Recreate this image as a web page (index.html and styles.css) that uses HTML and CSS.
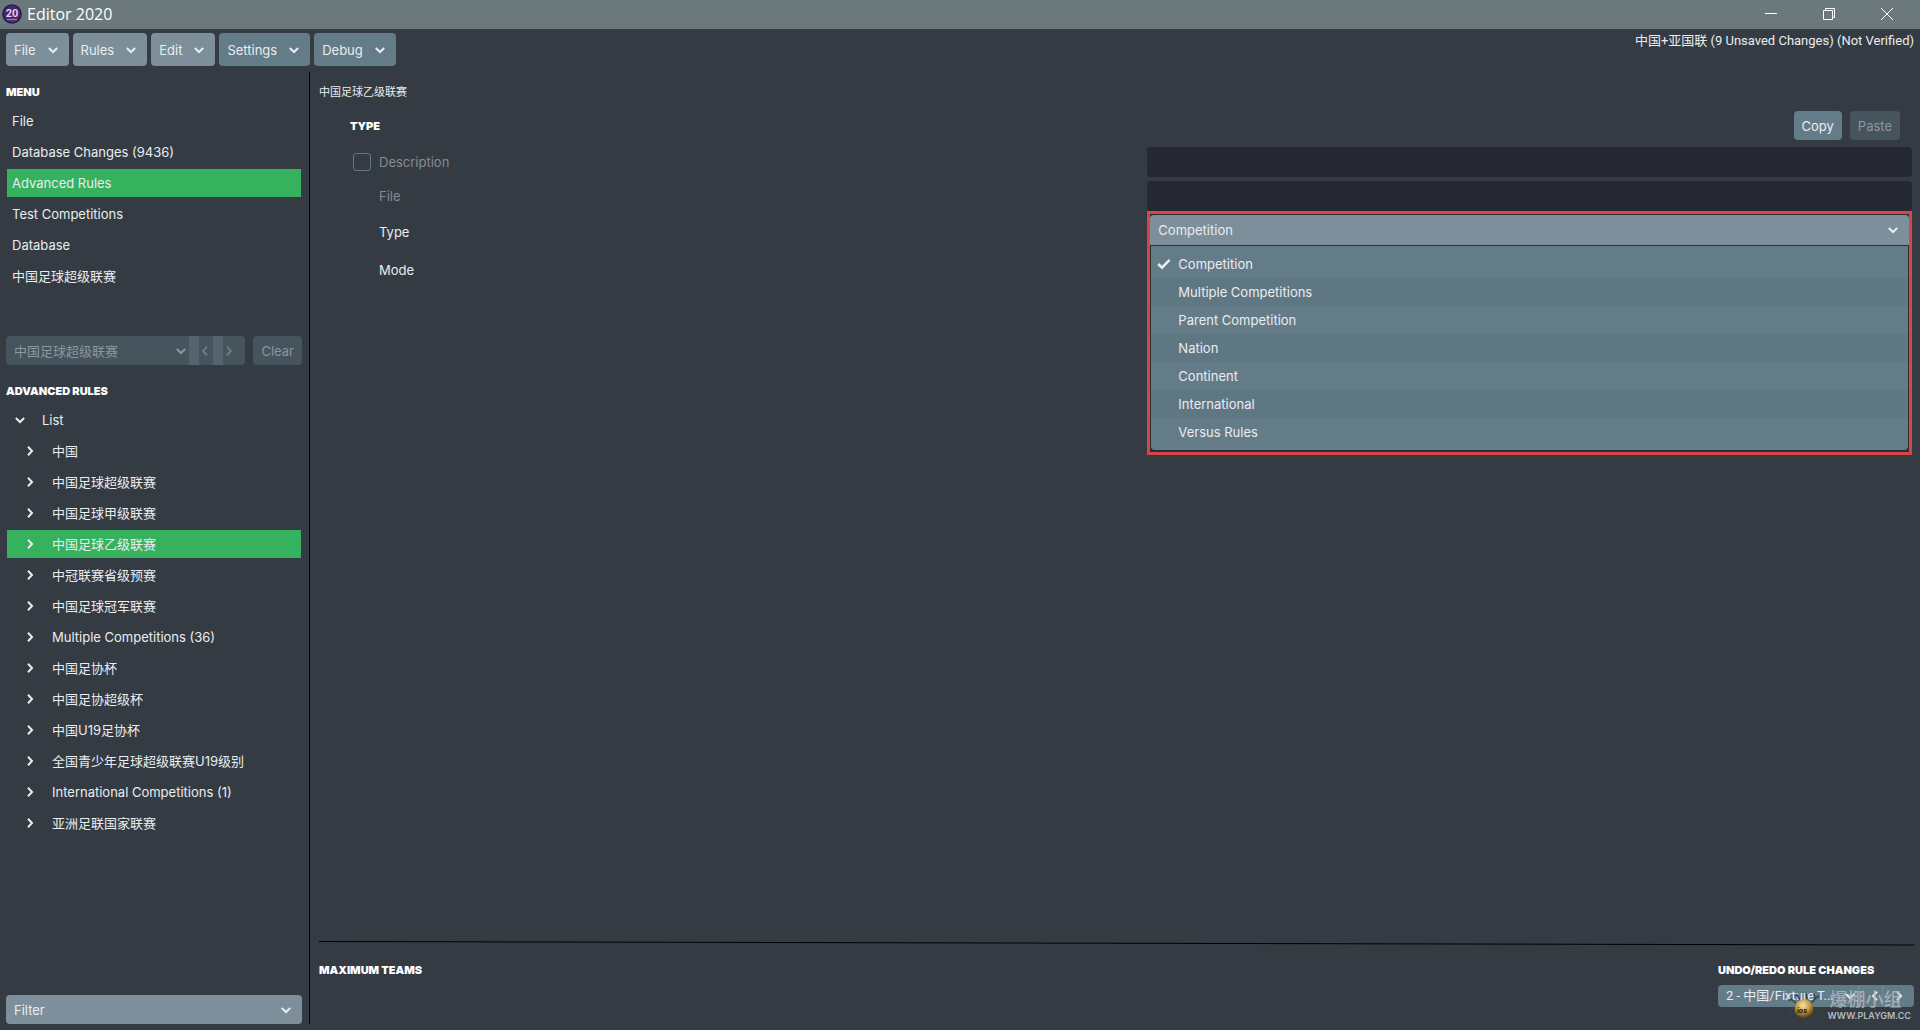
FILE: index.html
```html
<!DOCTYPE html>
<html lang="en">
<head>
    <meta charset="UTF-8">
    <meta name="viewport" content="width=device-width, initial-scale=1.0">
    <title>Editor 2020</title>
    <link rel="stylesheet" href="styles.css">
</head>
<body>
    <!-- Shared icons -->
    <svg class="sprite" aria-hidden="true">
        <symbol id="chevron-down" viewBox="0 0 12 12"><path d="M1.8 4 L6 8 L10.2 4" fill="none" stroke="currentColor" stroke-width="2"/></symbol>
        <symbol id="chevron-right" viewBox="0 0 12 12"><path d="M4 1.8 L8 6 L4 10.2" fill="none" stroke="currentColor" stroke-width="2"/></symbol>
        <symbol id="chevron-left" viewBox="0 0 12 12"><path d="M8 1.8 L4 6 L8 10.2" fill="none" stroke="currentColor" stroke-width="2"/></symbol>
        <symbol id="check" viewBox="0 0 14 12"><path d="M1.2 6 L5 9.6 L12.6 1.8" fill="none" stroke="currentColor" stroke-width="2.6"/></symbol>
    </svg>

    <header class="titlebar">
        <svg class="logo" viewBox="0 0 20 20" aria-hidden="true">
            <circle cx="10" cy="10" r="9.8" fill="#2c1b4a"/>
            <circle cx="10" cy="10" r="8.4" fill="#43286a"/>
            <text x="10" y="13" text-anchor="middle" class="logo-text">20</text>
            <path d="M5 15.5 H15" stroke="#9b6fb4" stroke-width="1.4"/>
        </svg>
        <span class="app-name">Editor 2020</span>
        <div class="window-controls">
            <button type="button" aria-label="Minimize"><svg viewBox="0 0 14 14"><path d="M1 6.5 H13"/></svg></button>
            <button type="button" aria-label="Restore"><svg viewBox="0 0 14 14"><path d="M1.5 3.5 H10.5 V12.5 H1.5 Z M3.5 3.5 V1.5 H12.5 V10.5 H10.5"/></svg></button>
            <button type="button" aria-label="Close"><svg viewBox="0 0 14 14"><path d="M1 1 L13 13 M13 1 L1 13"/></svg></button>
        </div>
    </header>

    <div class="toolbar">
        <nav class="toolbar-menus">
            <button type="button" class="btn light">File <svg class="icon"><use href="#chevron-down"/></svg></button>
            <button type="button" class="btn light">Rules <svg class="icon"><use href="#chevron-down"/></svg></button>
            <button type="button" class="btn light">Edit <svg class="icon"><use href="#chevron-down"/></svg></button>
            <button type="button" class="btn">Settings <svg class="icon"><use href="#chevron-down"/></svg></button>
            <button type="button" class="btn">Debug <svg class="icon"><use href="#chevron-down"/></svg></button>
        </nav>
        <span class="status">中国+亚国联 (9 Unsaved Changes) (Not Verified)</span>
    </div>

    <div class="workspace">
        <aside class="sidebar">
            <h2>Menu</h2>
            <nav class="menu">
                <a href="#">File</a>
                <a href="#">Database Changes (9436)</a>
                <a href="#" class="active">Advanced Rules</a>
                <a href="#">Test Competitions</a>
                <a href="#">Database</a>
                <a href="#">中国足球超级联赛</a>
            </nav>

            <div class="history">
                <div class="split">
                    <div class="select">
                        <select aria-label="History" disabled><option>中国足球超级联赛</option></select>
                        <svg class="icon"><use href="#chevron-down"/></svg>
                    </div>
                    <button type="button" aria-label="Back" disabled><svg class="icon"><use href="#chevron-left"/></svg></button>
                    <button type="button" aria-label="Forward" disabled><svg class="icon"><use href="#chevron-right"/></svg></button>
                </div>
                <button type="button" class="btn small" disabled>Clear</button>
            </div>

            <h2>Advanced Rules</h2>
            <nav class="menu tree">
                <a href="#" class="root"><svg class="icon"><use href="#chevron-down"/></svg>List</a>
                <a href="#"><svg class="icon"><use href="#chevron-right"/></svg>中国</a>
                <a href="#"><svg class="icon"><use href="#chevron-right"/></svg>中国足球超级联赛</a>
                <a href="#"><svg class="icon"><use href="#chevron-right"/></svg>中国足球甲级联赛</a>
                <a href="#" class="active"><svg class="icon"><use href="#chevron-right"/></svg>中国足球乙级联赛</a>
                <a href="#"><svg class="icon"><use href="#chevron-right"/></svg>中冠联赛省级预赛</a>
                <a href="#"><svg class="icon"><use href="#chevron-right"/></svg>中国足球冠军联赛</a>
                <a href="#"><svg class="icon"><use href="#chevron-right"/></svg>Multiple Competitions (36)</a>
                <a href="#"><svg class="icon"><use href="#chevron-right"/></svg>中国足协杯</a>
                <a href="#"><svg class="icon"><use href="#chevron-right"/></svg>中国足协超级杯</a>
                <a href="#"><svg class="icon"><use href="#chevron-right"/></svg>中国U19足协杯</a>
                <a href="#"><svg class="icon"><use href="#chevron-right"/></svg>全国青少年足球超级联赛U19级别</a>
                <a href="#"><svg class="icon"><use href="#chevron-right"/></svg>International Competitions (1)</a>
                <a href="#"><svg class="icon"><use href="#chevron-right"/></svg>亚洲足联国家联赛</a>
            </nav>

            <div class="select filter">
                <select aria-label="Filter"><option>Filter</option></select>
                <svg class="icon"><use href="#chevron-down"/></svg>
            </div>
        </aside>

        <main class="content">
            <p class="breadcrumb">中国足球乙级联赛</p>
            <div class="section-head">
                <h2>Type</h2>
                <div class="actions">
                    <button type="button" class="btn small">Copy</button>
                    <button type="button" class="btn small" disabled>Paste</button>
                </div>
            </div>

            <form class="rules-form">
                <div class="field muted">
                    <div class="field-label">
                        <input type="checkbox" id="use-description" aria-label="Use description">
                        <label for="description">Description</label>
                    </div>
                    <input type="text" id="description">
                </div>
                <div class="field muted">
                    <div class="field-label"><label for="file">File</label></div>
                    <input type="text" id="file">
                </div>
                <div class="field tall">
                    <div class="field-label"><label for="type">Type</label></div>
                    <div class="dropdown">
                        <div class="popup">
                            <div class="select">
                                <select id="type"><option>Competition</option></select>
                                <svg class="icon"><use href="#chevron-down"/></svg>
                            </div>
                            <div class="options" role="listbox" aria-label="Type">
                                <button type="button" role="option" aria-selected="true"><svg class="tick"><use href="#check"/></svg>Competition</button>
                                <button type="button" role="option">Multiple Competitions</button>
                                <button type="button" role="option">Parent Competition</button>
                                <button type="button" role="option">Nation</button>
                                <button type="button" role="option">Continent</button>
                                <button type="button" role="option">International</button>
                                <button type="button" role="option">Versus Rules</button>
                            </div>
                        </div>
                    </div>
                </div>
                <div class="field tall">
                    <div class="field-label"><label for="mode">Mode</label></div>
                    <div class="mode"><select id="mode"></select></div>
                </div>
            </form>

            <footer class="footer">
                <svg class="rule" viewBox="0 0 100 6" preserveAspectRatio="none" aria-hidden="true"><path d="M0 1.5 L100 5"/></svg>
                <div class="footer-row">
                    <h2>Maximum Teams</h2>
                    <div class="undo">
                        <h2>Undo/Redo Rule Changes</h2>
                        <div class="split">
                            <div class="select">
                                <select aria-label="Rule change"><option>2 - 中国/Fixture T...</option></select>
                                <svg class="icon"><use href="#chevron-down"/></svg>
                            </div>
                            <button type="button" aria-label="Undo"><svg class="icon"><use href="#chevron-left"/></svg></button>
                            <button type="button" aria-label="Redo"><svg class="icon"><use href="#chevron-right"/></svg></button>
                        </div>
                    </div>
                </div>
            </footer>
        </main>
    </div>

    <div class="watermark">
        <svg viewBox="0 0 36 32" aria-hidden="true">
            <defs>
                <radialGradient id="ball" cx="0.45" cy="0.3" r="0.7">
                    <stop offset="0" stop-color="#f6e3a8"/>
                    <stop offset="0.5" stop-color="#c89a3c"/>
                    <stop offset="1" stop-color="#4a3412"/>
                </radialGradient>
            </defs>
            <path d="M10 13 L5 9 L3 11 M9 18 L2 19 M11 23 L4 23 M14 10 L11 5 L9 6 M21 9 L20 3 M25 13 L29 9 L28 4 M28 9 L33 6" fill="none" stroke="#39434b" stroke-width="1.6"/>
            <circle cx="18" cy="19" r="9.5" fill="url(#ball)"/>
            <text x="16" y="23" text-anchor="middle" class="ball-text">ios</text>
        </svg>
        <div class="watermark-text">
            <span class="watermark-name">爆棚小组</span>
            <span>WWW.PLAYGM.CC</span>
        </div>
    </div>
</body>
</html>
```

FILE: styles.css
```css
* { box-sizing: border-box; }
body { margin: 0; min-height: 100vh; display: flex; flex-direction: column; background-color: #353b43; color: #e9edf0; font-family: Inter, "Noto Sans CJK SC", sans-serif; font-size: 13px; line-height: 20px; }
button, select, input { font: inherit; color: inherit; border: none; margin: 0; }
select { appearance: none; background: none; width: 100%; height: 100%; padding: 0 8px; opacity: 1; }
h2 { margin: 0; font-size: 11px; line-height: 20px; font-weight: 900; text-transform: uppercase; color: #fff; }
.sprite { display: none; }
.icon { width: 12px; height: 12px; flex: none; }

.titlebar { display: flex; align-items: center; height: 29px; padding: 0 4px 1px 2px; background-color: #6b797d; color: #fff; }
.logo { width: 20px; height: 20px; }
.logo-text { font: 700 11px Roboto, sans-serif; fill: #efc8f2; }
.app-name { margin-left: 5px; font-family: "Open Sans", sans-serif; font-size: 16px; }
.window-controls { display: flex; margin-left: auto; }
.window-controls button { width: 58px; height: 28px; padding: 0; background: none; }
.window-controls svg { display: block; width: 14px; height: 14px; margin: auto; fill: none; stroke: #fff; stroke-width: 1; }

.toolbar { display: flex; justify-content: space-between; padding: 4px 6px 0; }
.toolbar-menus { display: flex; gap: 4px; }
.btn { display: flex; align-items: center; gap: 11px; height: 33px; padding: 0 10px 0 8px; border-radius: 4px; background-color: #647b88; }
.btn.light { background-color: #7c8f9a; }
.btn.small { height: 29px; padding: 0 8px; }
.btn:disabled { background-color: #46545d; color: #8b969d; }
.status { margin-top: -2px; font-family: Roboto, "Noto Sans CJK SC", sans-serif; }

.workspace { flex: 1; display: flex; margin-top: 6px; }
.sidebar { display: flex; flex-direction: column; width: 310px; margin-bottom: 6px; padding: 10px 7px 0 6px; border-right: 1px solid #000; }
.menu { display: flex; flex-direction: column; gap: 3px; margin: 5px 1px 0; }
.menu a { display: flex; align-items: center; height: 28px; padding: 0 5px; color: inherit; text-decoration: none; }
.menu .active { background-color: #36b25f; }
.tree a { padding-left: 17px; }
.tree .icon { margin-right: 16px; }
.tree .root { padding-left: 7px; }

.history { display: flex; gap: 8px; margin: 46px 0 16px; }
.split { display: flex; flex: 1; height: 29px; padding-right: 8px; border-radius: 4px; overflow: hidden; background-color: #46545d; color: #8b969d; }
.select { position: relative; display: flex; align-items: center; flex: 1; }
.select .icon { position: absolute; right: 10px; pointer-events: none; }
.split .select .icon { right: 2px; }
.split button { display: flex; align-items: center; width: 24px; padding: 0; background-color: inherit; }
.split button:disabled { border-left: 10px solid #53646f; color: #6d7a83; }
.filter { flex: none; height: 29px; margin-top: auto; border-radius: 4px; background-color: #7c8f9a; }

.content { flex: 1; display: flex; flex-direction: column; padding: 10px 6px 0 9px; }
.breadcrumb { margin: 0; font-size: 11px; }
.section-head { display: flex; align-items: center; justify-content: space-between; margin-top: 9px; padding: 0 14px 0 31px; }
.actions { display: flex; gap: 8px; }

.rules-form { display: flex; flex-direction: column; gap: 4px; margin: 7px 2px 0 0; }
.field { display: grid; grid-template-columns: 52% 48%; align-items: center; min-height: 30px; }
.field.tall { min-height: 34px; }
.field-label { display: flex; justify-content: flex-start; align-items: center; padding-left: 60px; }
.field.muted { color: #858b91; }
.field input[type="text"] { height: 30px; border-radius: 4px; background-color: #252830; }
.field input[type="checkbox"] { appearance: none; width: 18px; height: 18px; margin: 0 8px 0 -26px; border: 1px solid #667784; border-radius: 3px; }

/* Open dropdown, its list lies over the rows below */
.dropdown { position: relative; height: 34px; }
.popup { position: absolute; z-index: 1; top: -4px; left: 0; right: 0; padding: 1px 0 2px; border: 3px solid #d94448; background-color: #2a2f37; }
.popup .select { height: 30px; border-radius: 4px 4px 0 0; background-color: #7c8f9a; }
.options { display: flex; flex-direction: column; margin: 1px 1px 0; padding: 4px 0; border-radius: 0 0 4px 4px; background-color: #647b88; }
.options button { display: flex; align-items: center; height: 28px; padding: 0 0 0 27px; background-color: #647b88; text-align: left; }
.options button:nth-child(even) { background-color: #5f7683; }
.mode { height: 30px; padding: 0 2px; }
.mode select { border-radius: 4px; background-color: #7c8f9a; }
.tick { width: 14px; height: 12px; margin: 0 7px 0 -21px; }

.footer { margin-top: auto; padding-bottom: 23px; }
.rule { display: block; width: 100%; height: 6px; }
.rule path { stroke: #000; stroke-width: 1; vector-effect: non-scaling-stroke; }
.footer-row { display: flex; justify-content: space-between; margin-top: 14px; }
.undo { width: 196px; }
.undo .split { height: 22px; margin-top: 5px; background-color: #647b88; color: #e9edf0; }
.undo .split select { padding-right: 0; font-family: Roboto, "Noto Sans CJK SC", sans-serif; }
.undo .split button { padding-left: 10px; border-left: 1px solid #728894; }

/* Site mark in the corner */
.watermark { position: absolute; right: 9px; bottom: 8px; display: flex; align-items: flex-end; pointer-events: none; }
.watermark svg { width: 36px; height: 32px; }
.ball-text { font: italic 700 7px Inter, sans-serif; fill: #241a0c; }
.watermark-text { display: flex; flex-direction: column; margin-left: 5px; font-size: 9px; line-height: 12px; font-weight: 600; color: #b4bbc0; }
.watermark-name { padding-left: 2px; font-size: 18px; line-height: 20px; font-weight: 500; opacity: 0.8; }
```
